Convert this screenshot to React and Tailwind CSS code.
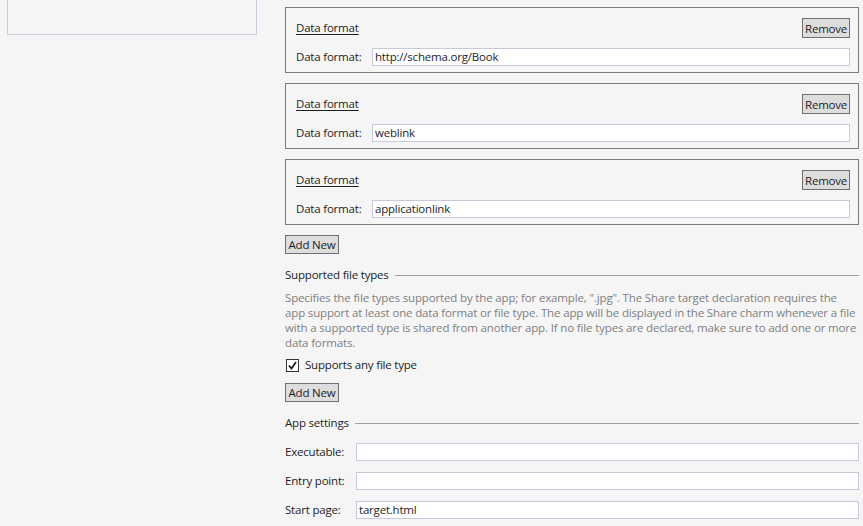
const formats = ['http://schema.org/Book', 'weblink', 'applicationlink'];

const settings = [
  { label: 'Executable:', value: '' },
  { label: 'Entry point:', value: '' },
  { label: 'Start page:', value: 'target.html' },
];

function Button({ children, className = '' }) {
  return (
    <button className={`h-[19px] whitespace-nowrap border border-[#707070] bg-[#dddddd] px-[2px] text-[11.5px] leading-[17px] text-[#1e1e1e] ${className}`}>
      {children}
    </button>
  );
}

function TextBox({ value, className = '' }) {
  return (
    <div className={`h-[18px] flex-1 border border-[#c9c9dc] bg-white px-[2px] text-[11.5px] leading-[16px] text-[#1e1e1e] ${className}`}>
      {value}
    </div>
  );
}

function Heading({ children }) {
  return (
    <div className="flex h-[16px] items-center gap-[6px]">
      <span className="text-[11.5px] leading-[16px] text-[#1e1e1e]">{children}</span>
      <div className="h-px flex-1 bg-[#a0a0a0]" />
    </div>
  );
}

function FormatCard({ value }) {
  return (
    <div className="flex flex-col border border-[#7a7a7a] pl-[10px] pr-[8px] pt-[10px] pb-[6px]">
      <div className="flex h-[20px] items-center justify-between">
        <span className="text-[11.5px] underline underline-offset-2 text-[#1e1e1e]">Data format</span>
        <Button className="h-[20px] w-[48px]">Remove</Button>
      </div>
      <div className="mt-[10px] flex items-center">
        <span className="w-[76px] text-[11.5px] text-[#1e1e1e]">Data format:</span>
        <TextBox value={value} />
      </div>
    </div>
  );
}

export default function App() {
  return (
    <div
      className="flex h-[526px] w-[863px] overflow-hidden bg-[#f5f5f5] tracking-[-0.2px]"
      style={{ fontFamily: '"Open Sans", "Noto Sans", sans-serif' }}
    >
      <div className="w-[285px] shrink-0">
        <div className="ml-[7px] h-[35px] w-[250px] border border-t-0 border-[#cfcfe2]" />
      </div>

      <div className="flex w-[574px] flex-col pt-[7px]">
        <div className="flex flex-col gap-[10px]">
          {formats.map((f) => (
            <FormatCard key={f} value={f} />
          ))}
        </div>

        <Button className="mt-[10px] w-[54px]">Add New</Button>

        <div className="mt-[13px]">
          <Heading>Supported file types</Heading>
        </div>
        <p className="mt-[7px] whitespace-nowrap text-[11.5px] leading-[15px] tracking-[-0.15px] text-[#7f7f7f]">
          Specifies the file types supported by the app; for example, ".jpg". The Share target declaration requires the
          <br />
          app support at least one data format or file type. The app will be displayed in the Share charm whenever a file
          <br />
          with a supported type is shared from another app. If no file types are declared, make sure to add one or more
          <br />
          data formats.
        </p>

        <label className="mt-[8px] flex h-[14px] items-center gap-[6px] text-[11.5px] text-[#1e1e1e]">
          <span className="ml-px flex h-[13px] w-[13px] items-center justify-center border border-[#333333] bg-white">
            <svg width="9" height="9" viewBox="0 0 9 9">
              <path d="M1 4.5 L3.5 7.5 L8 1" fill="none" stroke="#1e1e1e" strokeWidth="1.8" />
            </svg>
          </span>
          Supports any file type
        </label>

        <Button className="mt-[11px] w-[54px]">Add New</Button>

        <div className="mt-[13px]">
          <Heading>App settings</Heading>
        </div>

        <div className="mt-[12px] flex flex-col gap-[12px]">
          {settings.map((s) => (
            <div key={s.label} className="flex h-[17px] items-center">
              <span className="w-[71px] text-[11.5px] leading-[17px] text-[#1e1e1e]">{s.label}</span>
              <TextBox value={s.value} className="h-[17px] leading-[15px]" />
            </div>
          ))}
        </div>
      </div>
    </div>
  );
}
